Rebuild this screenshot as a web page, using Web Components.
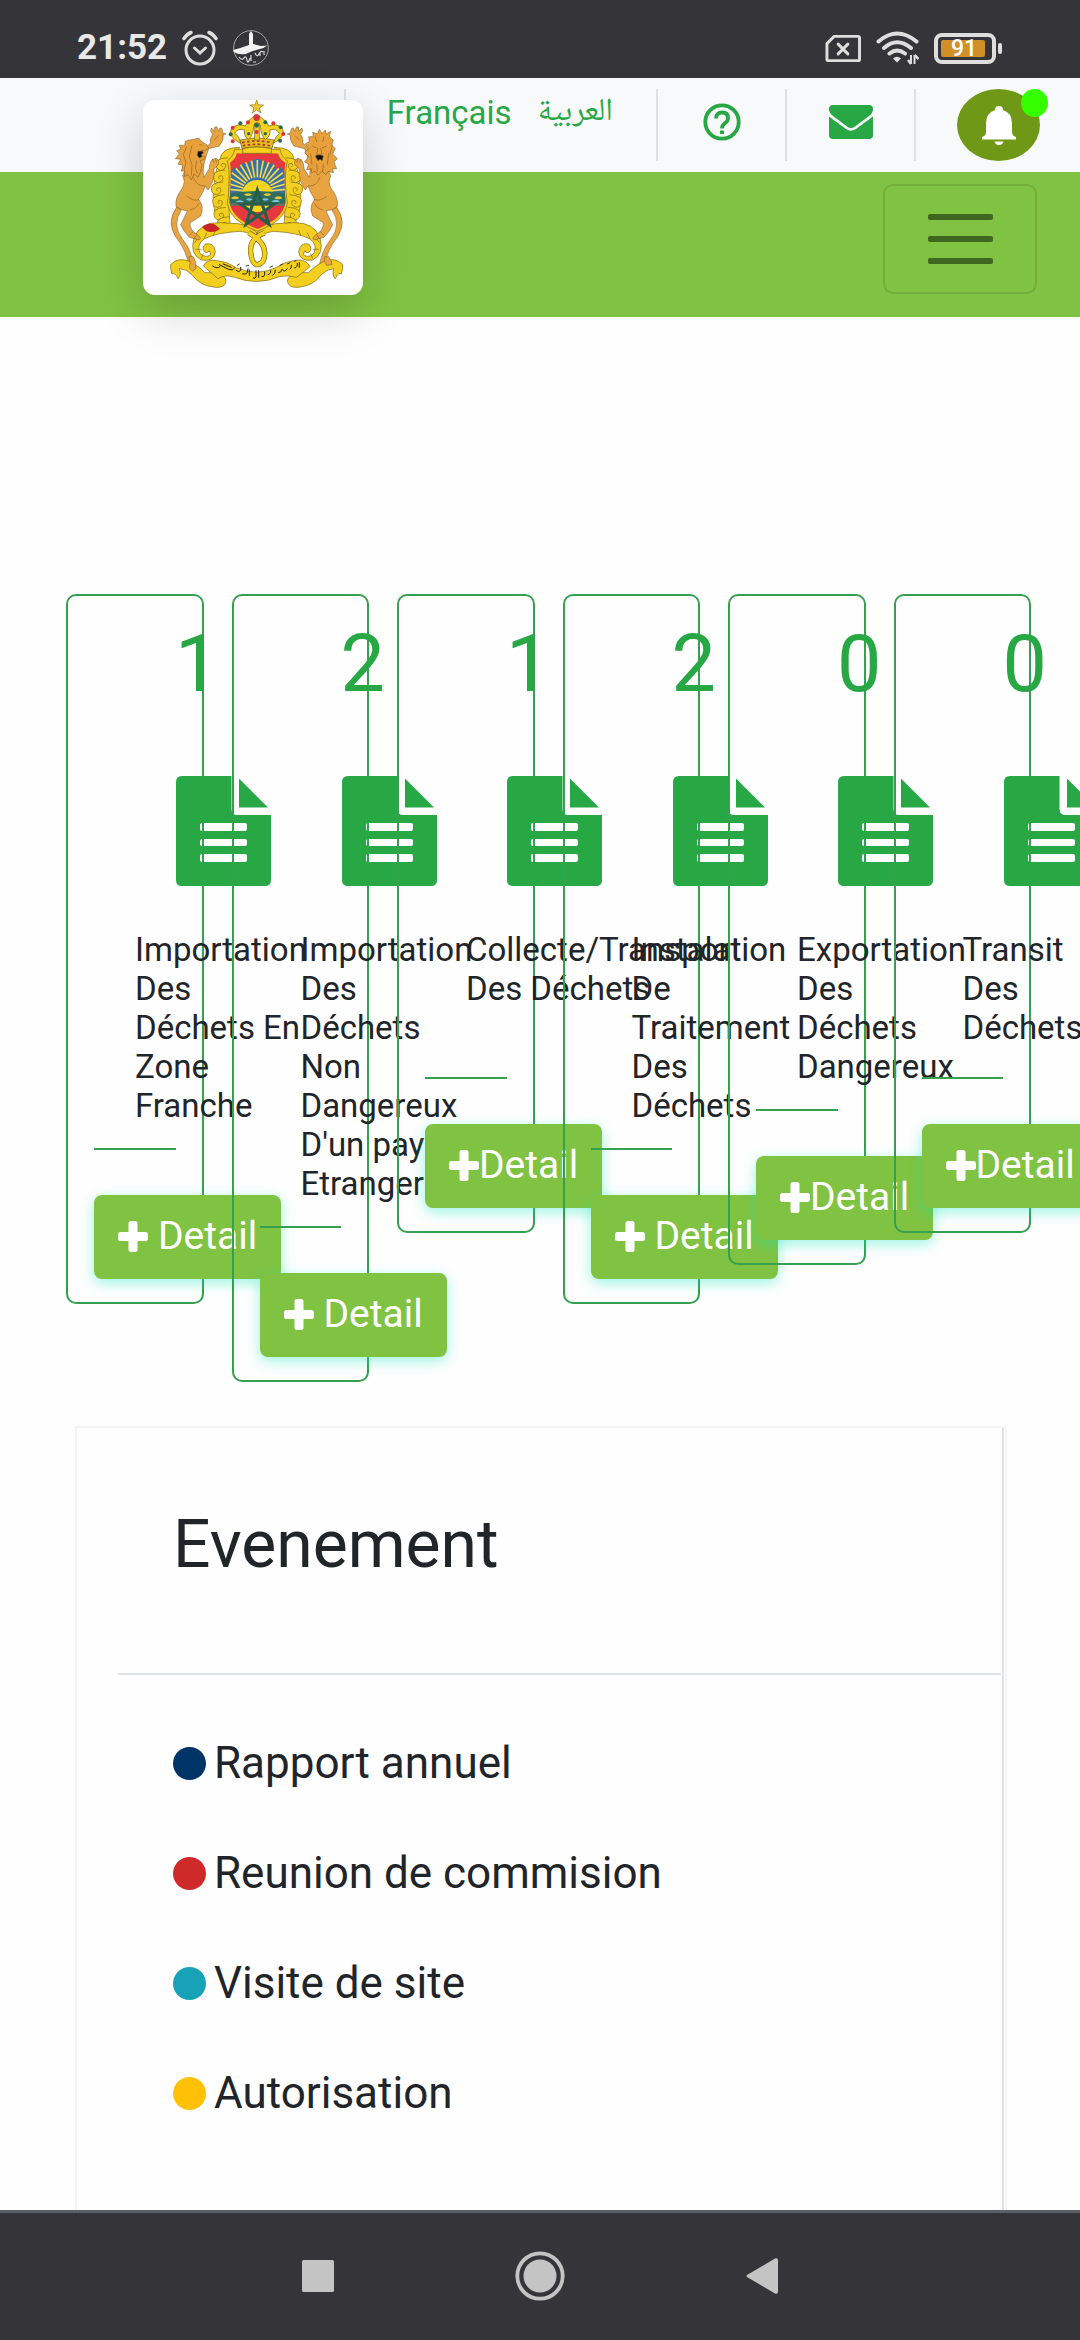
<!DOCTYPE html>
<html lang="fr">
<head>
<meta charset="utf-8">
<meta name="viewport" content="width=device-width, initial-scale=1">
<title>Gestion des déchets</title>
<style>
  html, body { margin: 0; height: 100%; }
  body {
    --green: #28a745;
    --lime: #80c242;
    --line: #dee2e6;
    --chrome: #353539;
    font-family: Roboto, "Noto Sans", "DejaVu Sans", sans-serif;
    color: #212529;
    background: #fefefe;
  }
</style>
</head>
<body>
<app-shell>
  <status-bar slot="top" time="21:52" battery="91"></status-bar>
  <site-header slot="top"></site-header>
  <card-row>
    <stat-card count="1" spaced>Importation Des Déchets En Zone Franche</stat-card>
    <stat-card count="2" spaced>Importation Des Déchets Non Dangereux D'un pays Etranger</stat-card>
    <stat-card count="1">Collecte/Transport Des Déchets</stat-card>
    <stat-card count="2" spaced>Instalation De Traitement Des Déchets</stat-card>
    <stat-card count="0">Exportation Des Déchets Dangereux</stat-card>
    <stat-card count="0">Transit Des Déchets</stat-card>
  </card-row>
  <event-panel heading="Evenement">
    <event-item color="#003366">Rapport annuel</event-item>
    <event-item color="#cf2a2a">Reunion de commision</event-item>
    <event-item color="#17a2b8">Visite de site</event-item>
    <event-item color="#ffc107">Autorisation</event-item>
  </event-panel>
  <system-nav slot="bottom"></system-nav>
</app-shell>

<script>
const define = (name, render) => customElements.define(name, class extends HTMLElement {
  connectedCallback() {
    if (this.shadowRoot) return;
    this.attachShadow({ mode: "open" }).innerHTML = render(this);
  }
});

define("app-shell", () => `
<style>
  :host { display: flex; flex-direction: column; height: 100vh; overflow: hidden; }
  main { flex: 1; min-height: 0; display: flex; flex-direction: column; overflow: hidden; padding-top: 277px; }
  ::slotted(event-panel) { flex: 1 0 auto; }
</style>
<slot name="top"></slot>
<main><slot></slot></main>
<slot name="bottom"></slot>`);

define("status-bar", el => `
<style>
  :host { display: flex; align-items: center; justify-content: space-between; height: 60px;
    padding: 18px 77px 0; background: var(--chrome); color: #e8e8e8; flex: none; }
  .group { display: flex; align-items: center; gap: 15px; }
  time { font-size: 35px; font-weight: 700; line-height: 40px; }
  svg { display: block; flex: none; }
  .battery { position: relative; width: 69px; height: 31px; }
  .battery span { position: absolute; inset: 0 9px 0 0; text-align: center; font-size: 23px; font-weight: 500; line-height: 32px; color: #fff; }
</style>
<div class="group">
  <time>${el.getAttribute("time")}</time>
  <svg width="36" height="36" viewBox="0 0 36 36" fill="none" stroke="#dedede" stroke-width="3" stroke-linecap="round">
    <circle cx="18" cy="20" r="14"/><path d="M12.500 18l5.500 5 5.500-5"/><path d="M2 8.500Q5 4 9 2.500M34 8.500Q31 4 27 2.500" stroke-width="3.500"/>
  </svg>
  <svg width="36" height="36" viewBox="0 0 36 36">
    <circle cx="18" cy="18" r="17.300" fill="none" stroke="#a9a9ab" stroke-width="1"/>
    <path d="M16 15V4l2-3 2 3v10q5 1 8 2l6-.5q-3 3-7 3.500-8 2-14 5-8 1-12-2l-1-2q8-2 16-5z" fill="#f2f2f2"/>
    <path d="M6 27q3 4 5 1t3 2 3-2M18 25v6M22 23q2 5 4 1t4-2M20 32h3M27 22v4M31 21v4" fill="none" stroke="#d8d8d8" stroke-width="1.200"/>
  </svg>
</div>
<div class="group">
  <svg width="36" height="29" viewBox="0 0 37 29" fill="none" stroke="#dedede" stroke-width="3">
    <path d="M9.500 2H34q1.500 0 1.500 1.500v22q0 1.500-1.500 1.500H3.500Q2 27 2 25.500V9.500z" stroke-linejoin="round"/><path d="M13.500 10l10 10M23.500 10l-10 10" stroke-linecap="round"/>
  </svg>
  <svg width="43" height="34" viewBox="0 0 43 34" fill="none" stroke="#dedede" stroke-width="4" stroke-linecap="round">
    <path d="M2.500 10.500Q21 -5.500 40.500 10.500M8 17Q21 5.500 35 17M13.500 22.500Q21 16.500 29 22.500"/><path d="M17 27.500q4-3.500 8 0l-4 4z" fill="#dedede" stroke="none"/>
    <path d="M35 24v9M38.500 33v-9" stroke-width="2" stroke-linecap="butt"/><path d="M35 33l-3-4M38.500 24l4 4" stroke-width="2.500" stroke-linecap="butt"/>
  </svg>
  <div class="battery">
    <svg width="69" height="31" viewBox="0 0 69 31"><rect x="2" y="2" width="58" height="27" rx="6" fill="none" stroke="#dedede" stroke-width="4"/><rect x="7" y="7" width="44" height="17" rx="2" fill="#d18f27"/><rect x="64" y="10" width="4" height="11" rx="2" fill="#dedede"/></svg>
    <span>${el.getAttribute("battery")}</span>
  </div>
</div>`);

define("site-header", () => `
<style>
  :host { display: block; position: relative; flex: none; }
  .top { display: flex; justify-content: flex-end; background: #f8f9fb; padding: 11px 40px 11px 0; }
  .cell { display: flex; align-items: center; box-sizing: border-box; height: 72px; padding: 0 41px 6px; border-left: 2px solid var(--line); }
  .cell.lang { align-items: flex-start; gap: 26px; padding: 0 43px 0 41px; }
  .cell.bell { padding: 0 0 0 41px; }
  a { color: var(--green); text-decoration: none; font-size: 33px; line-height: 48px; display: block; }
  .ar { font-family: "Noto Naskh Arabic", "DejaVu Sans", sans-serif; font-size: 32px; }
  .icon { width: 45px; display: flex; justify-content: center; }
  svg { display: block; }
  button { font: inherit; border: 0; padding: 0; background: none; }
  .bell button { position: relative; width: 83px; height: 72px; border-radius: 50%; background: #6f9816; display: flex; align-items: center; justify-content: center; }
  .bell i { position: absolute; right: -8px; top: 0; width: 27px; height: 28px; border-radius: 50%; background: #3f0; }
  .bar { display: flex; justify-content: flex-end; background: var(--lime); padding: 12px 43px 23px; }
  .bar button { box-sizing: border-box; width: 154px; height: 110px; border: 2px solid rgba(0,0,0,.1); border-radius: 10px; display: flex; flex-direction: column; gap: 16px; align-items: center; justify-content: center; }
  .bar button span { width: 65px; height: 6px; border-radius: 2px; background: #40671f; }
  brand-emblem { position: absolute; left: 143px; top: 22px; }
</style>
<nav class="top">
  <div class="cell lang"><a href="#fr">Français</a><a href="#ar" class="ar" lang="ar">العربية</a></div>
  <div class="cell"><a class="icon" href="#aide" aria-label="Aide">
    <svg width="38" height="38" viewBox="0 0 38 38" fill="none" stroke="#28a745" stroke-width="3.800"><circle cx="19" cy="19" r="16.700"/><path d="M13 15.500q0-6 6-6t6 5.500q0 3-3 5.200-3 2-3 5.300"/><path d="M17 27.500h4v3.500h-4z" fill="#28a745" stroke="none"/></svg></a></div>
  <div class="cell"><a class="icon" href="#messages" aria-label="Messages">
    <svg width="44" height="34" viewBox="0 0 44 34" fill="#28a745"><path d="M4 0h36q4 0 4 4 0 4-4 7L26 21.500q-4 3-8 0L4 11Q0 8 0 4 0 0 4 0z"/><path d="M0 11.500L17 24q5 3.500 10 0l17-12.500V30q0 4-4 4H4q-4 0-4-4z"/></svg></a></div>
  <div class="cell bell"><button aria-label="Notifications">
    <svg width="34" height="39" viewBox="0 0 34 39" fill="#fff"><path d="M17 0q4 0 4 4 9 3 9 13v9q0 4 4 5v2.500H0V31q4-1 4-5v-9Q4 7 13 4q0-4 4-4zM12.500 35.500h9q-1 3.500-4.500 3.500t-4.500-3.500z"/></svg>
    <i></i></button></div>
</nav>
<div class="bar"><button aria-label="Menu"><span></span><span></span><span></span></button></div>
<brand-emblem></brand-emblem>`);

/* Coat of arms: scroll work, shield, crown, two lions and the motto ribbon. */
define("brand-emblem", () => {
  const rays = Array.from({ length: 17 }, (_, i) => {
    const a = Math.PI * (i + .5) / 17, c = Math.cos(a), s = Math.sin(a);
    return `<path d="M${352 - 44 * c} ${306 - 44 * s}L${352 - 96 * c} ${306 - 96 * s}"/>`;
  }).join("");
  const gems = [[272,133],[278,113],[301,100],[324,97],[376,97],[400,100],[422,112],[430,132],[420,152],[278,154]]
    .map(([x, y], i) => `<circle cx="${x}" cy="${y}" r="6" fill="${i % 2 ? "#d8343c" : "#2a6b4c"}"/>`).join("");
  const curls = [[246,225],[238,262],[232,298],[236,336],[240,374],[250,402]]
    .map(([x, y]) => `<path d="M${x + 18} ${y - 22}Q${x - 28} ${y - 20} ${x - 16} ${y + 8}Q${x - 4} ${y + 24} ${x + 10} ${y + 8}Q${x + 14} ${y - 8} ${x} ${y - 4}Q${x - 6} ${y + 2} ${x + 2} ${y + 6}"/>`).join("");
  const side = `
    <g fill="#f3d01f" stroke="#7a6410" stroke-width="2">
      <path d="M300 172Q246 172 240 206Q226 240 222 290Q212 350 238 400L270 404Q262 330 268 262Q270 210 282 192z"/>
      ${curls}
      <path d="M240 398Q180 396 162 444Q148 492 184 510Q224 516 226 484Q220 456 196 462Q184 474 194 486Q202 492 208 482L212 494Q196 506 180 490Q168 462 194 446Q230 428 300 424Q336 428 348 446L350 426Q318 398 272 400z"/>
      <path d="M176 440l-12 18M200 428l-8 18M226 420l-6 16M166 478l18 0M184 506l6-16" fill="none"/>
    </g>`;
  const lionBody = `
    <path d="M110 352Q78 396 108 442Q140 480 150 540L163 536Q158 486 128 448Q94 404 124 360z" fill="#e8a440"/>
    <path d="M128 258Q138 276 126 296Q104 324 108 350Q124 362 142 362Q132 386 122 404Q130 424 148 442L178 450Q186 444 172 434L158 424Q148 408 150 398L182 378Q194 350 176 328Q190 306 196 288L204 300Q226 270 222 238L236 222Q238 204 222 206Q208 212 208 236L192 262Q186 240 196 206L206 176L238 168Q252 150 250 134L258 132L248 128Q248 112 240 114L236 124L230 110L224 112L224 124L214 114L212 122L218 134Q208 146 212 158L196 176Q150 190 128 258z" fill="#e8a440"/>
    <path d="M140 318Q160 336 178 328M150 360Q170 356 176 340M160 262Q170 290 196 288M216 206l6 12M226 206l4 12M160 424l-12 12M170 434l-8 12M222 150l14-14" fill="none"/>`;
  return `
<style>
  :host { display: block; width: 220px; height: 195px; background: #fff; border-radius: 12px; box-shadow: 0 16px 48px rgba(0,0,0,.175); }
  svg { display: block; width: 100%; height: 100%; }
</style>
<svg viewBox="9 30 660 585" role="img" aria-label="Armoiries">
  ${side}<g transform="matrix(-1 0 0 1 702 0)">${side}</g>
  <path d="M186 412Q204 394 226 404L240 416Q224 430 200 424z" fill="#c8242b"/>
  <path d="M284 178H420Q424 200 442 212Q430 260 442 340Q436 392 352 424Q268 392 262 340Q274 260 262 212Q280 200 284 178z" fill="#f3d01f" stroke="#7a6410" stroke-width="2"/>
  <clipPath id="field"><path d="M290 190H414Q418 208 436 218Q430 260 437 336Q430 386 352 417Q276 386 268 336Q276 260 270 218Q288 206 290 190z"/></clipPath>
  <g clip-path="url(#field)">
    <path d="M260 180h190v250H260z" fill="#e8383f"/>
    <path d="M255 330V262L284 232 296 238 304 220 322 222 334 212 352 206 370 212 384 222 400 220 408 238 420 232 450 262V330z" fill="#3a70a8"/>
    <g stroke="#f3d94a" stroke-width="5">${rays}</g>
    <circle cx="352" cy="318" r="48" fill="#f7d51f"/>
    <path d="M260 312Q352 294 446 312V346H260z" fill="#2f6e5e"/>
    <path d="M272 324q14-10 26 0-14 8-26 0M312 314q12-8 24 0-12 8-24 0M370 314q12-8 24 0-12 8-24 0M402 324q14-10 26 0-14 8-26 0" fill="#e8c43a"/>
    <path d="M286 336q14-10 26 0-14 8-26 0M318 328q10-6 20 0-10 8-20 0M366 328q10-6 20 0-10 8-20 0M394 334q14-10 26 0-14 8-26 0" fill="#7cc4dc"/>
    <path d="M260 344h190" stroke="#6e7460" stroke-width="7"/>
  </g>
  <path d="M352 300L387 403 300 341H404L318 403z" fill="none" stroke="#285e48" stroke-width="9" stroke-linejoin="miter"/>
  <g stroke="#6d5912" stroke-width="2">
    <path d="M300 150Q350 138 402 150L396 176Q350 166 306 176z" fill="#e2bd22"/>
    <path fill-rule="evenodd" d="M302 160Q262 140 274 116Q292 98 316 108Q322 90 350 74Q380 90 386 108Q412 98 428 116Q438 140 400 160Q406 138 418 130Q410 114 390 120Q392 140 376 148Q364 140 360 104Q350 92 342 104Q338 140 326 148Q310 140 314 120Q292 114 284 130Q298 138 302 160z" fill="#f3d01f"/>
    <path d="M344 100h14v50h-14z" fill="#f3d01f"/>
    <path d="M350 30L355 44 371 45 358 54 363 69 350 60 337 69 342 54 329 45 345 44z" fill="#efc62a" stroke-width="1.500"/>
    <path d="M308 176Q350 166 394 176V190H308z" fill="#f3d01f"/>
  </g>
  <path d="M306 158Q350 148 396 158M308 168Q350 158 394 168" fill="none" stroke="#b83228" stroke-width="5" stroke-dasharray="8 7"/>
  ${gems}
  <circle cx="350" cy="83" r="10" fill="#d8343c"/><circle cx="350" cy="106" r="7" fill="#2a6b4c"/><circle cx="350" cy="126" r="6" fill="#d8343c"/>
  <circle cx="326" cy="131" r="5" fill="#2a6b4c"/><circle cx="376" cy="131" r="5" fill="#2a6b4c"/>
  <g stroke="#70501f" stroke-width="1.500" stroke-linejoin="round">${lionBody}
    <path d="M148 150L162 148 176 144 184 154 200 164 206 174 198 180 184 182 182 198 196 200 192 208 180 212 186 226 182 244 174 262 162 252 154 270 144 254 134 260 134 242 124 244 128 226 114 222 122 208 106 206 118 192 110 182 122 178 118 166 134 166 136 154z" fill="#e8a03a"/>
    <path d="M140 170l-10 24 8 24-6 22M156 166l-8 34 8 26-2 30M170 212l-4 22 6 16M178 164l10 1" fill="none"/>
    <path d="M174 184l14 0 2 6-6 2 2 8-8 4-6-8z" fill="#111"/>
    <g transform="matrix(-1 0 0 1 700 0)">${lionBody}</g>
    <path d="M506 140L520 140 518 126 532 132 538 118 546 130 556 120 558 132 572 124 568 140 580 150 574 164 586 176 578 192 592 206 582 216 590 236 578 236 580 248 564 244 558 254 546 244 534 256 526 244 514 248 514 236 500 240 506 222 494 216 506 200 494 188 506 176 496 162 508 154z" fill="#e8a03a"/>
    <path d="M516 168l14 6M560 168l-14 6M534 174l-4 20h16l-4-20M512 190l4 34M566 190l-4 34M530 222l2 22M550 222l-2 22M578 160l-8 34M526 140l4 16M552 140l-4 16" fill="none"/>
    <path d="M526 198q12-6 24 0l-4 14-6-5-6 5z" fill="#111"/>
  </g>
  <g fill="#f3d01f" stroke="#7a6410" stroke-width="2" stroke-linejoin="round">
    <path id="tail" d="M92 524Q114 500 148 514Q182 532 194 548L232 548Q256 556 258 574Q254 594 226 592Q180 588 156 554Q138 536 118 536Q126 554 114 566Q104 544 96 552Q90 534 92 524z"/>
    <use href="#tail" transform="matrix(-1 0 0 1 700 0)"/>
    <path d="M190 528Q200 506 232 512Q262 514 290 534Q352 560 410 532Q440 512 478 510Q500 510 510 530L470 562Q444 554 418 560Q350 588 284 562Q256 552 234 566z"/>
  </g>
  <g fill="#e8a440" stroke="#70501f" stroke-width="1.500"><path d="M146 500q8 18 2 34l10 10 10-8q2-20-8-36z"/><path d="M554 500q-4 14 6 26l16-2q0-12-10-24z"/></g>
  <path d="M374 428Q328 446 332 486Q336 524 352 524Q376 520 374 486Q372 454 326 428" fill="none" stroke="#7a6410" stroke-width="16"/>
  <path d="M374 428Q328 446 332 486Q336 524 352 524Q376 520 374 486Q372 454 326 428" fill="none" stroke="#f3d01f" stroke-width="12"/>
  <g fill="none" stroke="#1c1a10" stroke-width="3" stroke-linecap="round">
    <path d="M218 528q14 10 22 2M238 524l28 14q12 6 18-4M250 522l24 10M288 540q8 10 14 0l0-8M308 552q10 2 14-4l2-12M328 556v-16M340 564q6 4 8-4v-18M356 562v-20M366 560q10 2 8-14M384 554q8 0 8-12M398 556q10-6 8-16M416 548q8 0 10-10l8 6 8-8M450 538q6-2 4-12M464 534q10-2 8-14M478 532v-14"/>
    <path d="M292 526l6-4M318 528l8-2M390 532l8-4M420 526l8-4M442 522l8-4M464 514l4-2" stroke-width="2.500"/>
  </g>
</svg>`;
});

define("card-row", () => `
<style>
  :host { display: grid; grid-template-columns: repeat(6, minmax(0, 1fr)); column-gap: 28px; align-items: start; padding: 0 49px 0 66px; flex: none; }
</style>
<slot></slot>`);

define("stat-card", el => `
<style>
  :host { display: flex; flex-direction: column; align-items: flex-start; isolation: isolate;
    border: 2px solid #34a050; border-radius: 10px; padding: 21px 26px 23px; }
  strong { font-weight: 400; font-size: 79px; line-height: 95px; color: var(--green); margin: 0 0 64px 81px; }
  svg { display: block; }
  .doc { margin: 0 0 44px 82px; }
  h3 { margin: 0 0 23px 41px; width: min-content; min-height: 124px; font-size: 33px; line-height: 39px; font-weight: 400; }
  hr { width: 100%; height: 2px; margin: 0 0 45px; border: 0; background: #34a050; }
  button { display: flex; align-items: center; box-sizing: border-box; height: 84px; padding: 0 24px 2px; border: 0; border-radius: 8px; background: var(--lime); color: #fff; font: inherit; font-size: 39px; line-height: 46px; white-space: nowrap; box-shadow: 0 4px 14px rgba(0,230,180,.4); }
  :host([spaced]) button { gap: 10px; }
</style>
<strong>${el.getAttribute("count")}</strong>
<svg class="doc" width="95" height="110" viewBox="0 0 95 110" fill="#28a745">
  <path fill-rule="evenodd" d="M6 0H55.500V33q0 6 6 6H95V104q0 6-6 6H6q-6 0-6-6V6Q0 0 6 0zM26 47q-2 0-2 2v4q0 2 2 2H69q2 0 2-2V49q0-2-2-2zM26 63q-2 0-2 2v3q0 2 2 2H69q2 0 2-2V65q0-2-2-2zM26 78q-2 0-2 2v4q0 2 2 2H69q2 0 2-2V80q0-2-2-2z"/>
  <path d="M63 2.500L92 31.500H63z"/>
</svg>
<h3><slot></slot></h3>
<hr>
<button><svg width="30" height="31" viewBox="0 0 30 31" fill="#fff"><path d="M13 0h4q2.500 0 2.500 2.500V11H27.500Q30 11 30 13.500v4Q30 20 27.500 20H19.500v8.500Q19.500 31 17 31H13q-2.500 0-2.500-2.500V20H2.500Q0 20 0 17.500v-4Q0 11 2.500 11H10.500V2.500Q10.500 0 13 0z"/></svg>Detail</button>`);

define("event-panel", el => `
<style>
  :host { display: flex; margin: 44px 73px 0 75px; border: 2px solid #f4f4f5; border-bottom: 0; padding: 0 1px 0 41px; }
  section { flex: 1; border-right: 2px solid var(--line); padding-right: 1px; }
  header { border-bottom: 2px solid var(--line); padding: 77px 55px 89px; }
  h2 { margin: 0; font-size: 66px; line-height: 79px; font-weight: 400; }
  .list { display: flex; flex-direction: column; gap: 44px; padding: 55px; }
</style>
<section>
  <header><h2>${el.getAttribute("heading")}</h2></header>
  <div class="list"><slot></slot></div>
</section>`);

define("event-item", el => `
<style>
  :host { display: flex; align-items: center; gap: 8px; font-size: 44px; line-height: 66px; }
  i { width: 33px; height: 33px; border-radius: 50%; background: ${el.getAttribute("color")}; }
</style>
<i></i><span><slot></slot></span>`);

define("system-nav", () => `
<style>
  :host { display: flex; align-items: center; justify-content: center; gap: 160px; box-sizing: border-box; height: 130px; flex: none;
    padding-bottom: 2px; border-top: 3px solid #5c5f63; background: var(--chrome); position: relative; }
  button { border: 0; padding: 0; background: none; width: 62px; height: 62px; display: flex; align-items: center; justify-content: center; }
  svg { display: block; fill: #c4c4c4; }
</style>
<button aria-label="Applications récentes"><svg width="32" height="32" viewBox="0 0 32 32"><rect width="32" height="32" rx="1.500"/></svg></button>
<button aria-label="Accueil"><svg width="50" height="50" viewBox="0 0 50 50"><circle cx="25" cy="25" r="22.700" fill="none" stroke="#c4c4c4" stroke-width="3.800"/><circle cx="25" cy="25" r="16.500"/></svg></button>
<button aria-label="Retour"><svg width="32" height="36" viewBox="0 0 32 36"><path d="M1 17L29 .5q3-1 3 2v31q0 3-3 2L1 19q-1-1 0-2z"/></svg></button>`);
</script>
</body>
</html>
